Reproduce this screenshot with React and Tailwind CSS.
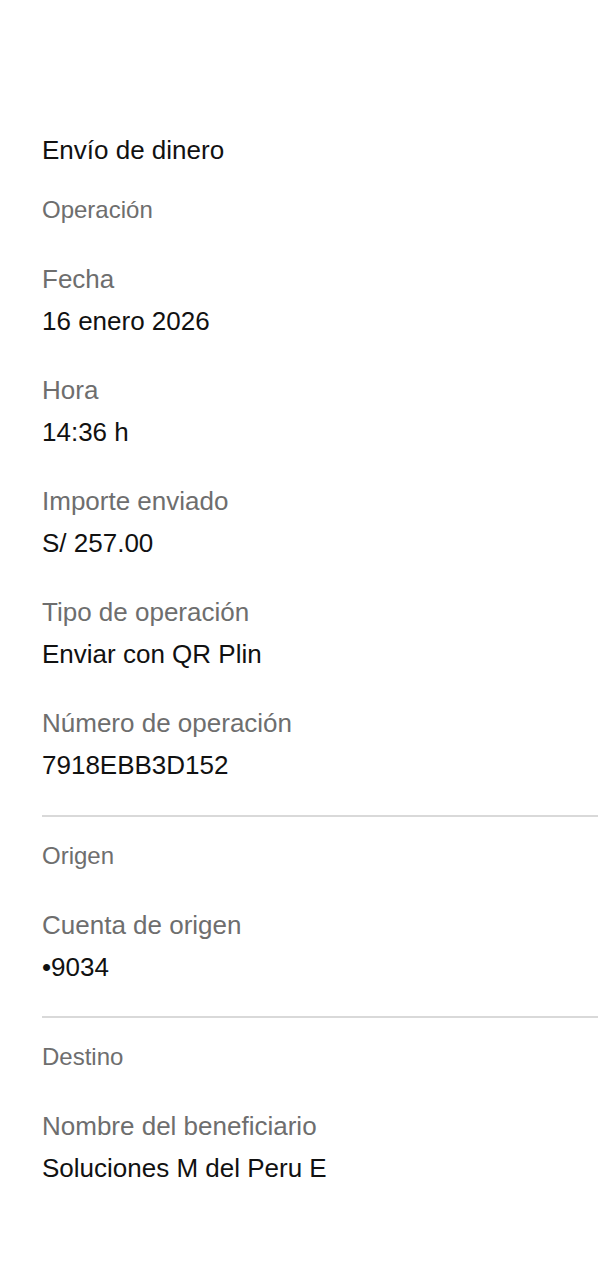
export default function App() {
  const font = { fontFamily: '"Liberation Sans", Arial, Helvetica, sans-serif' };
  const Item = ({ label, value }) => (
    <div className="flex flex-col mt-[27px]">
      <div className="text-[26px] leading-[42px] text-[#6e6e6e]">{label}</div>
      <div className="text-[26px] leading-[42px] text-[#111111]">{value}</div>
    </div>
  );
  const Section = ({ children }) => (
    <div className="text-[24px] leading-[42px] text-[#6e6e6e]">{children}</div>
  );
  return (
    <div className="w-[612px] min-h-[1280px] bg-white pl-[42px] pr-[14px] pt-[129px]" style={font}>
      <div className="text-[26px] leading-[42px] text-[#111111]">Envío de dinero</div>
      <div className="mt-[18px]">
        <Section>Operación</Section>
      </div>
      <Item label="Fecha" value="16 enero 2026" />
      <Item label="Hora" value="14:36 h" />
      <Item label="Importe enviado" value="S/ 257.00" />
      <Item label="Tipo de operación" value="Enviar con QR Plin" />
      <Item label="Número de operación" value="7918EBB3D152" />
      <div className="mt-[29px] h-[2px] bg-[#d9d9d9]" />
      <div className="mt-[18px]">
        <Section>Origen</Section>
      </div>
      <Item label="Cuenta de origen" value="•9034" />
      <div className="mt-[28px] h-[2px] bg-[#d9d9d9]" />
      <div className="mt-[18px]">
        <Section>Destino</Section>
      </div>
      <Item label="Nombre del beneficiario" value="Soluciones M del Peru E" />
    </div>
  );
}
